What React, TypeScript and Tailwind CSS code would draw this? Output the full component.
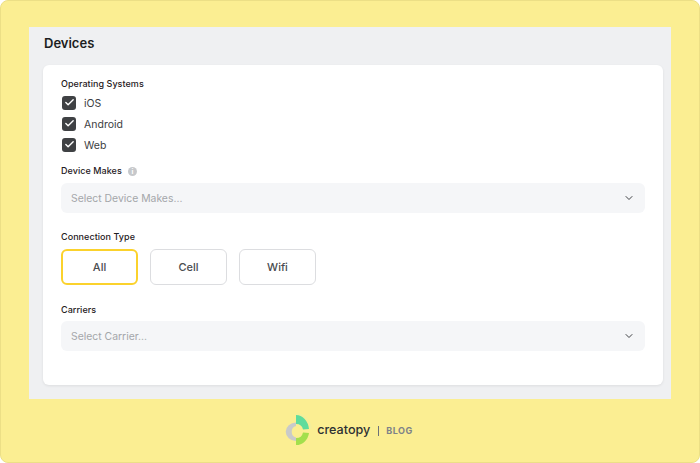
import { ChevronDown, Check } from 'lucide-react';

function FieldLabel({ children }: { children: React.ReactNode }) {
  return <div className="h-[14px] text-[9px] leading-[14px] font-medium text-[#1f2023] tracking-[0.05px]">{children}</div>;
}

function CheckRow({ label }: { label: string }) {
  return (
    <div className="flex h-[21px] items-center">
      <span className="flex h-[14px] w-[14px] ml-[1px] items-center justify-center rounded-[3px] bg-[#3f4144]">
        <Check size={11} strokeWidth={3} className="text-white" />
      </span>
      <span className="ml-[8px] pt-[2px] text-[10.5px] text-[#3c3e42]">{label}</span>
    </div>
  );
}

function SelectBox({ placeholder }: { placeholder: string }) {
  return (
    <div className="flex h-[30px] items-center justify-between rounded-[6px] bg-[#f5f6f8] pl-[10px] pr-[10px]">
      <span className="pt-[2px] text-[10.4px] text-[#a4a6aa]">{placeholder}</span>
      <ChevronDown size={12} strokeWidth={2} className="text-[#3f4144]" />
    </div>
  );
}

function TypeButton({ label, active = false }: { label: string; active?: boolean }) {
  return (
    <div
      className={
        active
          ? "flex h-[36px] w-[77px] items-center justify-center rounded-[6px] border-2 border-[#fbd22c] bg-white text-[11px] font-medium text-[#4a4c50]"
          : "flex h-[36px] w-[77px] items-center justify-center rounded-[6px] border border-[#dcdde0] bg-white text-[11px] font-medium text-[#4a4c50]"
      }
    >
      {label}
    </div>
  );
}

function Logo() {
  return (
    <svg width="28" height="36" viewBox="0 0 28 36" fill="none">
      <path d="M12.5 1 A14.5 16.5 0 0 1 27 16" stroke="#f3ee9c" strokeWidth="1.5" />
      <path d="M12 9.5 A10 9 0 0 0 12 28 L12 24.5 A6 6 0 0 1 12 13 Z" fill="#c9cbc9" />
      <path d="M12 2 A13 16 0 0 1 25 16 L19 16.5 A7 7 0 0 0 12 11 Z" fill="#5fdc9c" />
      <path d="M25 20 A13 14 0 0 1 12 32 L12 25 A7 7 0 0 0 19 19.5 Z" fill="#a3df4d" />
    </svg>
  );
}

export default function App() {
  return (
    <div className="flex h-[463px] w-[700px] flex-col rounded-[8px] border border-[#ecdf86] bg-[#fbee92] pt-[26px] pl-[28px] pr-[28px] font-['Inter',sans-serif]">
      <div className="h-[372px] bg-[#eff0f2] pl-[14px] pr-[8px]">
        <h1 className="ml-[1px] h-[38px] pt-[6px] text-[13px] leading-[20px] font-semibold text-[#1c1d20]">Devices</h1>
        {/* Card */}
        <div className="h-[320px] rounded-[6px] bg-white px-[18px] pt-[12px] shadow-[0_1px_3px_rgba(0,0,0,0.08)]">
          <FieldLabel>Operating Systems</FieldLabel>
          <div className="mt-[1px]">
            <CheckRow label="iOS" />
            <CheckRow label="Android" />
            <CheckRow label="Web" />
          </div>
          <div className="mt-[9px] flex items-center">
            <FieldLabel>Device Makes</FieldLabel>
            <span className="ml-[6px] flex h-[9px] w-[9px] items-center justify-center rounded-full bg-[#c6c8cb] text-[7px] font-bold leading-none text-white">i</span>
          </div>
          <div className="mt-[5px]">
            <SelectBox placeholder="Select Device Makes..." />
          </div>
          <div className="mt-[17px]">
            <FieldLabel>Connection Type</FieldLabel>
          </div>
          <div className="mt-[5px] flex gap-[12px]">
            <TypeButton label="All" active />
            <TypeButton label="Cell" />
            <TypeButton label="Wifi" />
          </div>
          <div className="mt-[18px]">
            <FieldLabel>Carriers</FieldLabel>
          </div>
          <div className="mt-[4px]">
            <SelectBox placeholder="Select Carrier..." />
          </div>
        </div>
      </div>
      {/* Footer logo */}
      <div className="flex flex-1 items-center justify-center pr-[3px]">
        <Logo />
        <span className="ml-[5px] text-[12.6px] font-medium leading-none text-[#2d3033]">creatopy</span>
        <span className="ml-[8px] h-[10px] w-px bg-[#6d7278]" />
        <span className="ml-[7px] text-[9px] font-bold tracking-[0.5px] text-[#7d8288]">BLOG</span>
      </div>
    </div>
  );
}
